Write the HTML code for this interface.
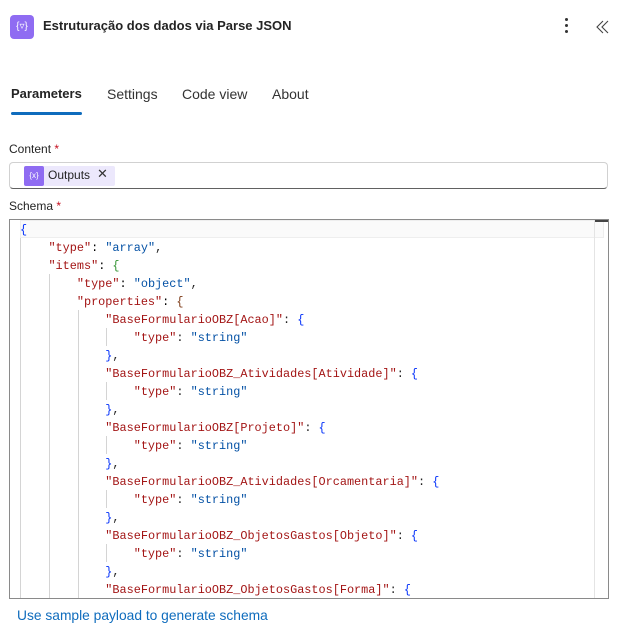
<!DOCTYPE html>
<html><head><meta charset="utf-8"><style>
*{margin:0;padding:0;box-sizing:border-box}
body{width:620px;height:626px;background:#fff;font-family:"Segoe UI","Liberation Sans",sans-serif;color:#242424;position:relative;overflow:hidden}
.a{position:absolute}
.code{font-family:"Liberation Mono",monospace;font-size:11.85px;white-space:pre;line-height:18px}
.k{color:#a31515}.s{color:#0451a5}.b1{color:#0431fa}.b2{color:#319331}.b3{color:#7b3814}.p{color:#000}
</style></head><body>
<div class="a" style="left:10px;top:15px;width:24px;height:24px;background:#8f6cf2;border-radius:4px;color:#fff;font-size:10px;text-align:center;line-height:24px">{▿}</div>
<div class="a" style="left:43px;top:18px;font-size:13px;font-weight:bold">Estruturação dos dados via Parse JSON</div>
<div class="a" style="left:565px;top:18px;width:3px;height:16px">
<div style="width:3px;height:3px;background:#333;border-radius:50%;margin-bottom:3px"></div><div style="width:3px;height:3px;background:#333;border-radius:50%;margin-bottom:3px"></div><div style="width:3px;height:3px;background:#333;border-radius:50%"></div></div>
<svg class="a" style="left:596px;top:20px" width="14" height="14" viewBox="0 0 14 14"><path d="M7 1L1 7l6 6M12 1L6 7l6 6" fill="none" stroke="#444" stroke-width="1.1"/></svg>
<div class="a" style="left:11px;top:86px;font-size:13px;font-weight:bold">Parameters</div>
<div class="a" style="left:107px;top:86px;font-size:14px;color:#333">Settings</div>
<div class="a" style="left:182px;top:86px;font-size:14px;color:#333">Code view</div>
<div class="a" style="left:272px;top:86px;font-size:14px;color:#333">About</div>
<div class="a" style="left:11px;top:112px;width:71px;height:3px;background:#0f6cbd;border-radius:2px"></div>
<div class="a" style="left:9px;top:142px;font-size:12px">Content <span style="color:#c50f1f">*</span></div>
<div class="a" style="left:9px;top:162px;width:599px;height:27px;border:1px solid #d1d1d1;border-bottom-color:#616161;border-radius:4px"></div>
<div class="a" style="left:24px;top:166px;width:91px;height:20px;background:#ece8fc;border-radius:2px"></div>
<div class="a" style="left:24px;top:166px;width:20px;height:20px;background:#8f6cf2;border-radius:2px;color:#fff;font-size:8px;text-align:center;line-height:20px">{x}</div>
<div class="a" style="left:48px;top:168px;font-size:12px">Outputs</div>
<div class="a" style="left:97px;top:166px;font-size:13px;color:#333">✕</div>
<div class="a" style="left:9px;top:199px;font-size:12px">Schema <span style="color:#c50f1f">*</span></div>
<div class="a" style="left:9px;top:219px;width:600px;height:380px;border:1px solid #8a8a8a;overflow:hidden">
<div class="a" style="left:10px;top:0;width:584px;height:18px;background:#fafafa;border:1px solid #eee"></div>
<div class="a" style="left:584px;top:0;width:14px;height:380px;border-left:1px solid #e4e4e4"></div>
<div class="a" style="left:585px;top:0;width:14px;height:2px;background:#444"></div>
<div class="a" style="left:10px;top:18px;width:1px;height:362px;background:#d4d4d4"></div>
<div class="a" style="left:39px;top:54px;width:1px;height:326px;background:#d4d4d4"></div>
<div class="a" style="left:68px;top:90px;width:1px;height:290px;background:#d4d4d4"></div>
<div class="a" style="left:96px;top:108px;width:1px;height:18px;background:#d4d4d4"></div>
<div class="a" style="left:96px;top:162px;width:1px;height:18px;background:#d4d4d4"></div>
<div class="a" style="left:96px;top:216px;width:1px;height:18px;background:#d4d4d4"></div>
<div class="a" style="left:96px;top:270px;width:1px;height:18px;background:#d4d4d4"></div>
<div class="a" style="left:96px;top:324px;width:1px;height:18px;background:#d4d4d4"></div>
<div class="a code" style="left:10px;top:1px"><span class="b1">{</span>
    <span class="k">"type"</span><span class="p">: </span><span class="s">"array"</span>,
    <span class="k">"items"</span><span class="p">: </span><span class="b2">{</span>
        <span class="k">"type"</span><span class="p">: </span><span class="s">"object"</span>,
        <span class="k">"properties"</span><span class="p">: </span><span class="b3">{</span>
            <span class="k">"BaseFormularioOBZ[Acao]"</span>: <span class="b1">{</span>
                <span class="k">"type"</span>: <span class="s">"string"</span>
            <span class="b1">}</span>,
            <span class="k">"BaseFormularioOBZ_Atividades[Atividade]"</span>: <span class="b1">{</span>
                <span class="k">"type"</span>: <span class="s">"string"</span>
            <span class="b1">}</span>,
            <span class="k">"BaseFormularioOBZ[Projeto]"</span>: <span class="b1">{</span>
                <span class="k">"type"</span>: <span class="s">"string"</span>
            <span class="b1">}</span>,
            <span class="k">"BaseFormularioOBZ_Atividades[Orcamentaria]"</span>: <span class="b1">{</span>
                <span class="k">"type"</span>: <span class="s">"string"</span>
            <span class="b1">}</span>,
            <span class="k">"BaseFormularioOBZ_ObjetosGastos[Objeto]"</span>: <span class="b1">{</span>
                <span class="k">"type"</span>: <span class="s">"string"</span>
            <span class="b1">}</span>,
            <span class="k">"BaseFormularioOBZ_ObjetosGastos[Forma]"</span>: <span class="b1">{</span></div>
</div>
<div class="a" style="left:17px;top:608px;font-size:13.8px;color:#0f6cbd">Use sample payload to generate schema</div>
</body></html>
